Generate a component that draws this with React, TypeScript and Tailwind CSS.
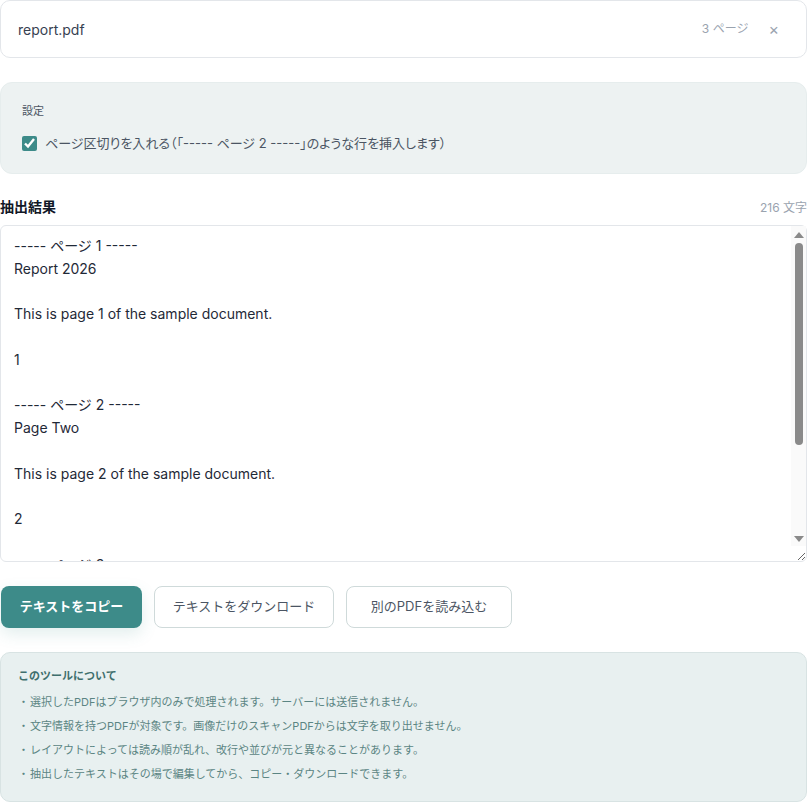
import { useState, type ReactElement } from "react";

const extracted = `----- ページ 1 -----
Report 2026

This is page 1 of the sample document.

1

----- ページ 2 -----
Page Two

This is page 2 of the sample document.

2

----- ページ 3 -----
Page Three

This is page 3 of the sample document.

3`;

const notes = [
  "選択したPDFはブラウザ内のみで処理されます。サーバーには送信されません。",
  "文字情報を持つPDFが対象です。画像だけのスキャンPDFからは文字を取り出せません。",
  "レイアウトによっては読み順が乱れ、改行や並びが元と異なることがあります。",
  "抽出したテキストはその場で編集してから、コピー・ダウンロードできます。",
];

export default function App(): ReactElement {
  const [pageBreaks, setPageBreaks] = useState(true);
  const [text, setText] = useState(extracted);

  return (
    <div className="w-[807px] bg-white font-['Inter','Noto_Sans_CJK_JP',sans-serif] text-[#1f2937]">
      {/* file card */}
      <div className="flex h-[58px] items-center rounded-[10px] border border-[#e3e6ea] pl-[17px] pr-[27px]">
        <span className="text-[14px] text-[#374151]">report.pdf</span>
        <span className="ml-auto text-[12px] text-[#9aa3af]">3 ページ</span>
        <button type="button" className="ml-[20px] text-[16px] leading-none text-[#9aa3af]">
          ×
        </button>
      </div>

      {/* settings */}
      <div className="mt-[24px] rounded-[12px] border border-[#e6eded] bg-[#edf2f2] px-[21px] pt-[20px] pb-[20px]">
        <div className="text-[11px] text-[#4b5563]">設定</div>
        <label className="mt-[14px] flex items-center gap-[8px] text-[13px] text-[#4b5563]">
          <input
            type="checkbox"
            checked={pageBreaks}
            onChange={(e) => setPageBreaks(e.target.checked)}
            className="size-[15px] accent-[#3d8b89]"
          />
          <span className="[font-feature-settings:'palt']">
            ページ区切りを入れる（「----- ページ 2 -----」のような行を挿入します）
          </span>
        </label>
      </div>

      {/* result */}
      <div className="mt-[22px] flex items-end justify-between">
        <span className="text-[14px] font-bold text-[#111827]">抽出結果</span>
        <span className="text-[12px] text-[#9aa3af]">216 文字</span>
      </div>
      <div className="relative mt-[8px]">
        <textarea
          value={text}
          onChange={(e) => setText(e.target.value)}
          className="block h-[337px] w-full rounded-[6px] border border-[#e3e6ea] py-[9px] pr-[28px] pl-[13px] text-[14px] leading-[22.75px] text-[#1f2937] outline-none"
        />
        {/* classic scrollbar look */}
        <div className="pointer-events-none absolute top-[1px] right-[1px] bottom-[16px] flex w-[15px] flex-col items-center bg-[#fafafa] pt-[6px] pb-[4px]">
          <div className="h-0 w-0 border-x-[5px] border-b-[6px] border-x-transparent border-b-[#8a8a8a]" />
          <div className="mt-[5px] h-[202px] w-[8px] rounded-full bg-[#8a8a8a]" />
          <div className="mt-auto h-0 w-0 border-x-[5px] border-t-[6px] border-x-transparent border-t-[#8a8a8a]" />
        </div>
      </div>

      {/* actions */}
      <div className="mt-[24px] flex gap-[12px] pl-px">
        <button
          type="button"
          className="h-[42px] w-[141px] rounded-[8px] bg-[#3d8b89] text-[13px] font-bold text-white shadow-[0_6px_16px_rgba(61,139,137,0.15)]"
        >
          テキストをコピー
        </button>
        <button
          type="button"
          className="h-[42px] w-[180px] rounded-[8px] border border-[#cfdada] bg-white text-[13px] text-[#4b5563]"
        >
          テキストをダウンロード
        </button>
        <button
          type="button"
          className="h-[42px] w-[166px] rounded-[8px] border border-[#cfdada] bg-white text-[13px] text-[#4b5563]"
        >
          別のPDFを読み込む
        </button>
      </div>

      {/* about */}
      <div className="mt-[24px] rounded-[10px] border border-[#d8e3e3] bg-[#e8f0f0] px-[17px] pt-[15px] pb-[14px]">
        <div className="text-[11px] font-bold text-[#3f6f6d]">このツールについて</div>
        <ul className="mt-[6px] flex flex-col">
          {notes.map((n) => (
            <li key={n} className="flex h-[24px] items-center text-[11px] text-[#5b8583]">
              <span className="w-[12px]">・</span>
              <span>{n}</span>
            </li>
          ))}
        </ul>
      </div>
    </div>
  );
}
